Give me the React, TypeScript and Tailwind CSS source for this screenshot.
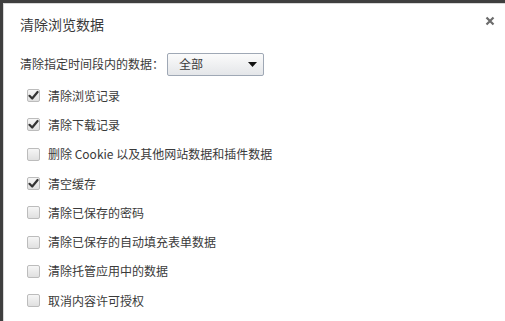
const items = [
  { label: "清除浏览记录", checked: true },
  { label: "清除下载记录", checked: true },
  { label: "删除 Cookie 以及其他网站数据和插件数据", checked: false },
  { label: "清空缓存", checked: true },
  { label: "清除已保存的密码", checked: false },
  { label: "清除已保存的自动填充表单数据", checked: false },
  { label: "清除托管应用中的数据", checked: false },
  { label: "取消内容许可授权", checked: false },
]

function CheckBox({ checked }: { checked: boolean }) {
  return (
    <div className="w-[13px] h-[13px] rounded-[2px] border border-[#bcbcbc] bg-gradient-to-b from-[#f6f6f6] to-[#e0e0e0] flex items-center justify-center">
      {checked && (
        <svg width="11" height="11" viewBox="0 0 11 11">
          <path d="M1.5 5.8 L4.2 8.5 L9.6 2" fill="none" stroke="#333" strokeWidth="2.2" strokeLinecap="round" strokeLinejoin="round" />
        </svg>
      )}
    </div>
  )
}

export default function App() {
  return (
    <div
      className="w-[505px] h-[321px] overflow-hidden bg-white border-t-[3px] border-l-[3px] border-[#3f3f3f] text-[#3a3a3a]"
      style={{ fontFamily: '"Microsoft YaHei", "Noto Sans CJK SC", "Liberation Sans", sans-serif' }}
    >
      <div className="h-full border-t border-l border-[#d8d8d8]">
        <div className="flex items-start justify-between pl-[16px] pr-[10px] pt-[10px]">
          <h1 className="text-[14px] leading-[20px] font-normal">清除浏览数据</h1>
          <svg width="10" height="10" viewBox="0 0 10 10" className="mt-[2px]">
            <path d="M1.5 1.5 L8.5 8.5 M8.5 1.5 L1.5 8.5" stroke="#6c6c6c" strokeWidth="2.2" />
          </svg>
        </div>

        <div className="flex items-center pl-[16px] mt-[18px] h-[24px]">
          <span className="text-[12px] leading-[18px]">清除指定时间段内的数据：</span>
          <div className="ml-[3px] w-[97px] h-[23px] border border-[#9fa8b5] rounded-[2px] bg-gradient-to-b from-[#fbfbfb] to-[#e4e6e9] flex items-center justify-between pl-[11px] pr-[6px]">
            <span className="text-[12px] leading-[18px]">全部</span>
            <svg width="9" height="5" viewBox="0 0 9 5">
              <path d="M0 0 H9 L4.5 5 Z" fill="#111" />
            </svg>
          </div>
        </div>

        <div className="mt-[5px] flex flex-col pl-[23px]">
          {items.map((it) => (
            <div key={it.label} className="h-[29.3px] flex items-center gap-[8px]">
              <CheckBox checked={it.checked} />
              <span className="text-[12px] leading-[18px]">{it.label}</span>
            </div>
          ))}
        </div>
      </div>
    </div>
  )
}
